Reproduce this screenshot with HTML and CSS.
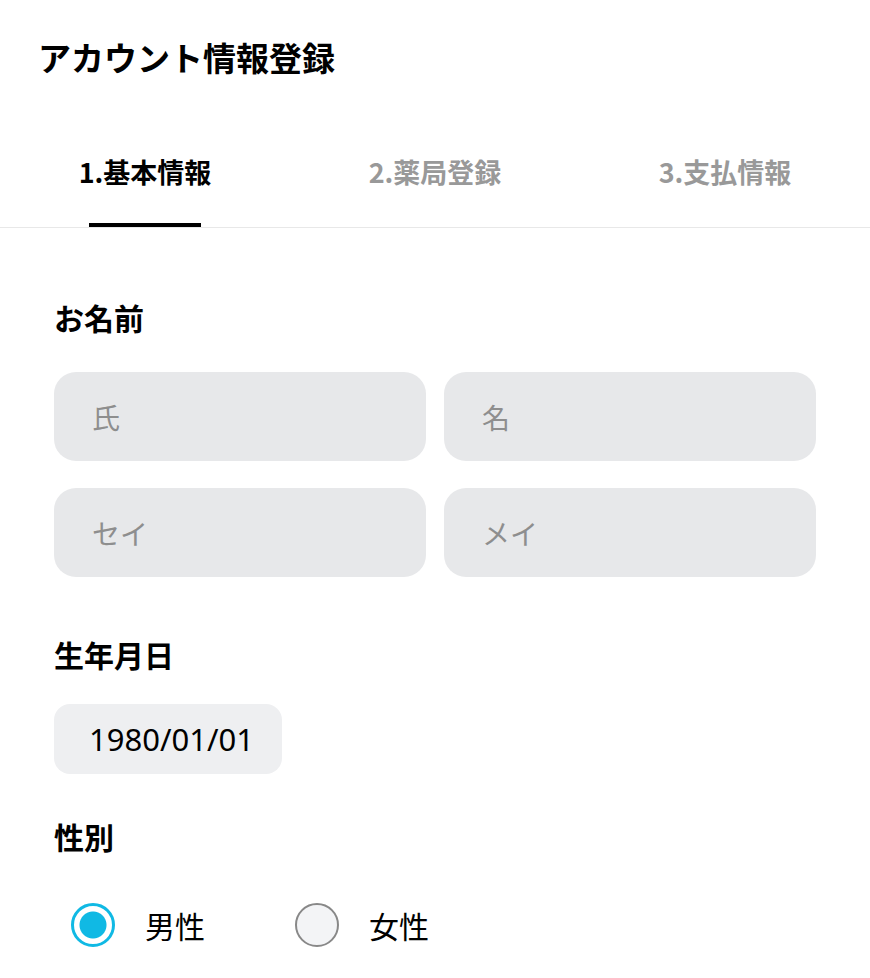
FILE: index.html
```html
<!DOCTYPE html>
<html lang="ja">

<head>
    <meta charset="UTF-8">
    <meta name="viewport" content="width=device-width, initial-scale=1.0">
    <title>アカウント情報登録</title>
    <link rel="stylesheet" href="styles.css">
</head>

<body>
    <h1 class="page-title">アカウント情報登録</h1>

    <nav class="steps">
        <div class="step active"><span>1.基本情報</span></div>
        <div class="step"><span>2.薬局登録</span></div>
        <div class="step"><span>3.支払情報</span></div>
    </nav>

    <form class="account-form">
        <h2 class="field-label">お名前</h2>
        <div class="name-grid">
            <input type="text" class="text-input" placeholder="氏">
            <input type="text" class="text-input" placeholder="名">
            <input type="text" class="text-input" placeholder="セイ">
            <input type="text" class="text-input" placeholder="メイ">
        </div>

        <h2 class="field-label">生年月日</h2>
        <div class="date-box">1980/01/01</div>

        <h2 class="field-label">性別</h2>
        <div class="gender-options">
            <label class="radio">
                <input type="radio" name="gender" checked>
                <span class="radio-mark"></span>
                <span class="radio-text">男性</span>
            </label>
            <label class="radio">
                <input type="radio" name="gender">
                <span class="radio-mark"></span>
                <span class="radio-text">女性</span>
            </label>
        </div>
    </form>
</body>

</html>
```

FILE: styles.css
```css
body {
    font-family: "Noto Sans CJK JP", "Noto Sans", sans-serif;
    margin: 0;
    padding: 0;
    background-color: #fff;
    color: #000;
}

.page-title {
    margin: 0;
    padding: 35px 0 0 38px;
    font-size: 33px;
    font-weight: bold;
    line-height: 44px;
}

.steps {
    display: grid;
    grid-template-columns: repeat(3, 1fr);
    margin-top: 73px;
    border-bottom: 1px solid #e8e8e8;
}

.step {
    display: flex;
    flex-direction: column;
    align-items: center;
    font-size: 27px;
    font-weight: bold;
    line-height: 40px;
    color: #999;
}

.step span {
    padding-bottom: 31px;
}

.step.active {
    color: #000;
}

.step.active::after {
    content: "";
    display: block;
    width: 112px;
    height: 4px;
    background-color: #000;
}

.step:not(.active)::after {
    content: "";
    display: block;
    height: 4px;
}

.account-form {
    padding: 0 54px;
}

.field-label {
    margin: 0;
    font-size: 30px;
    font-weight: bold;
    line-height: 40px;
}

.field-label:first-child {
    padding-top: 69px;
}

.name-grid {
    display: grid;
    grid-template-columns: 1fr 1fr;
    gap: 27px 18px;
    margin-top: 35px;
    margin-bottom: 57px;
}

.text-input {
    box-sizing: border-box;
    width: 100%;
    height: 89px;
    padding: 0 38px;
    border: none;
    border-radius: 22px;
    background-color: #e7e8ea;
    font-family: inherit;
    font-size: 28px;
    outline: none;
}

.text-input::placeholder {
    color: #8e8e8e;
}

.date-box {
    display: inline-block;
    margin-top: 30px;
    margin-bottom: 42px;
    padding: 0 28px 0 35px;
    height: 70px;
    line-height: 70px;
    border-radius: 16px;
    background-color: #eeeff1;
    font-family: "Noto Sans", sans-serif;
    font-size: 31px;
}

.gender-options {
    display: flex;
    gap: 90px;
    margin-top: 47px;
    padding-left: 17px;
}

.radio {
    display: flex;
    align-items: center;
    gap: 30px;
    font-size: 30px;
    cursor: pointer;
}

.radio input {
    display: none;
}

.radio-mark {
    box-sizing: border-box;
    width: 44px;
    height: 44px;
    border-radius: 50%;
    border: 2px solid #888;
    background-color: #f3f4f6;
}

.radio input:checked + .radio-mark {
    border: 3px solid #10b9e4;
    background-color: #fff;
    background-image: radial-gradient(circle, #10b9e4 13px, transparent 14px);
}
```
